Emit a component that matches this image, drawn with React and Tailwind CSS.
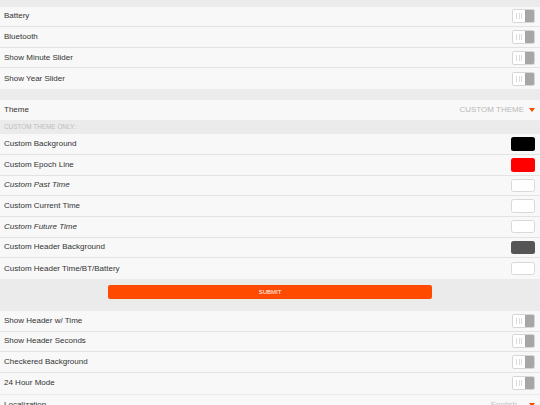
import React from "react";

const font = { fontFamily: '"Liberation Sans", Arial, Helvetica, sans-serif' };

function Toggle() {
  return (
    <div className="flex h-[14px] w-[23px] overflow-hidden rounded-[2px] border border-[#d6d6d6]">
      <div className="flex w-[12px] items-center justify-center gap-[1.5px] bg-white">
        <div className="h-[6px] w-px bg-[#dcdcdc]" />
        <div className="h-[6px] w-px bg-[#dcdcdc]" />
        <div className="h-[6px] w-px bg-[#dcdcdc]" />
      </div>
      <div className="flex-1 bg-[#a6a6a6]" />
    </div>
  );
}

function Swatch({ color }) {
  const bordered = color === "#ffffff";
  return (
    <div
      className={`h-[13.5px] w-[24px] rounded-[2.5px] ${bordered ? "border border-[#d9d9d9]" : ""}`}
      style={{ backgroundColor: color }}
    />
  );
}

function Row({ label, italic, right, last }) {
  return (
    <div
      className={`flex h-[20.67px] items-center justify-between bg-[#f8f8f8] pl-[4px] pr-[5px] ${
        last ? "" : "border-b border-[#e3e3e3]"
      }`}
    >
      <span className={`text-[8px] leading-none text-[#333333] ${italic ? "italic" : ""}`}>{label}</span>
      {right}
    </div>
  );
}

function Caret() {
  return (
    <svg width="6" height="4" viewBox="0 0 6 4" className="ml-[5px]">
      <polygon points="0,0 6,0 3,4" fill="#ff4a00" />
    </svg>
  );
}

export default function App() {
  const colors = [
    ["Custom Background", "#000000", false],
    ["Custom Epoch Line", "#ff0000", false],
    ["Custom Past Time", "#ffffff", true],
    ["Custom Current Time", "#ffffff", false],
    ["Custom Future Time", "#ffffff", true],
    ["Custom Header Background", "#555555", false],
    ["Custom Header Time/BT/Battery", "#ffffff", false],
  ];
  return (
    <div className="h-[405px] w-[540px] overflow-hidden bg-[#ebebeb]" style={font}>
      <div className="h-[6.5px]" />
      {["Battery", "Bluetooth", "Show Minute Slider", "Show Year Slider"].map((l, i) => (
        <Row key={l} label={l} right={<Toggle />} last={i === 3} />
      ))}
      <div className="h-[10.5px]" />
      <Row
        label="Theme"
        last
        right={
          <div className="flex items-center">
            <span className="text-[8px] leading-none text-[#b8b8b8]">CUSTOM THEME</span>
            <Caret />
          </div>
        }
      />
      <div className="flex h-[14px] items-center pl-[4px]">
        <span className="text-[6.4px] leading-none text-[#bdbdbd]">CUSTOM THEME ONLY:</span>
      </div>
      {colors.map(([l, c, it], i) => (
        <Row key={l} label={l} italic={it} right={<Swatch color={c} />} last={i === colors.length - 1} />
      ))}
      <div className="flex h-[32px] justify-center pt-[6px]">
        <div className="flex h-[14px] w-[324px] items-center justify-center rounded-[2px] bg-[#ff4a00]">
          <span className="text-[6px] leading-none text-white">SUBMIT</span>
        </div>
      </div>
      {["Show Header w/ Time", "Show Header Seconds", "Checkered Background", "24 Hour Mode"].map((l, i) => (
        <Row key={l} label={l} right={<Toggle />} last={i === 3} />
      ))}
      <div className="h-[1px]" />
      <Row
        label="Localization"
        last
        right={
          <div className="flex items-center">
            <span className="text-[8px] leading-none text-[#c4c4c4]">English</span>
            <span className="w-[7px]" />
            <Caret />
          </div>
        }
      />
    </div>
  );
}
